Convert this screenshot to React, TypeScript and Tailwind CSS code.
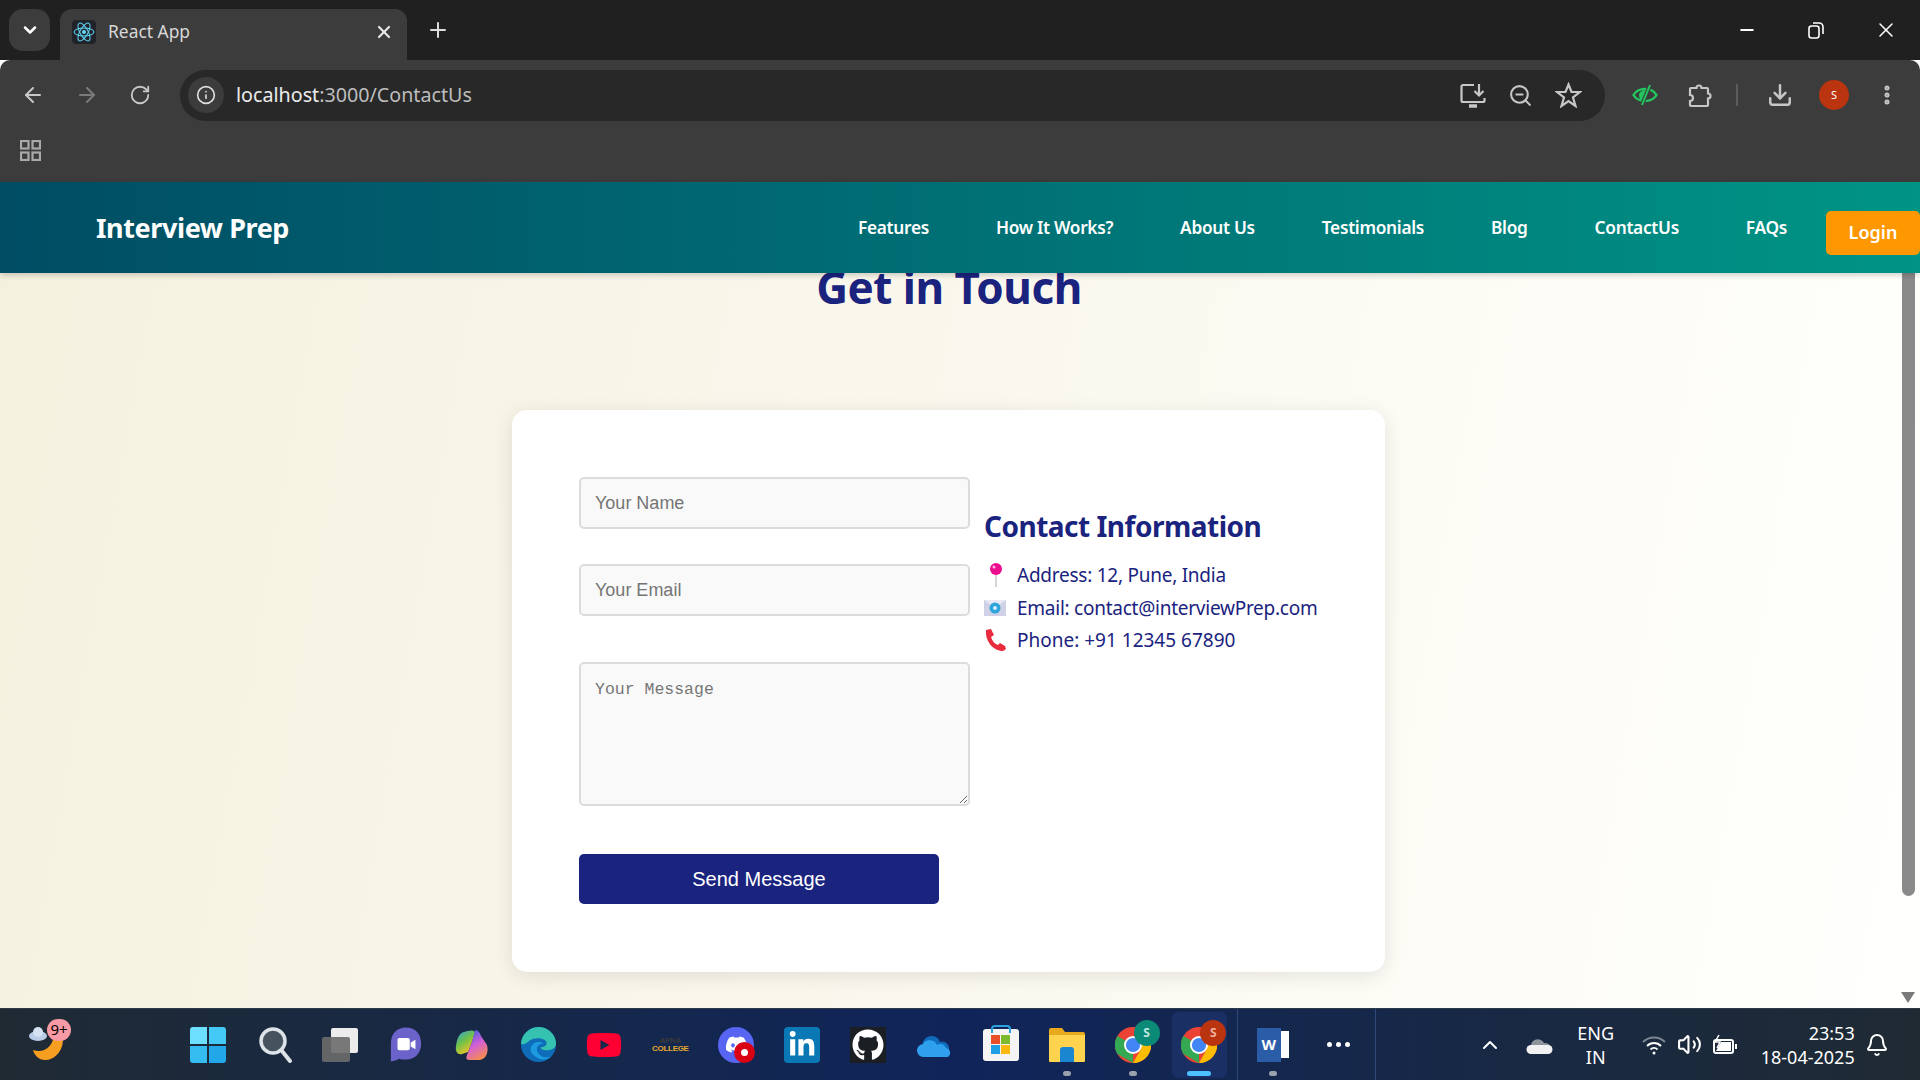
import React from "react";
import { ArrowLeft, ArrowRight, RotateCw, Info, ChevronDown, X, Plus, Minus, ZoomOut, Download, MoreVertical, ChevronUp, Bell, Volume2 } from "lucide-react";
import { FaLinkedinIn, FaGithub, FaDiscord, FaYoutube } from "react-icons/fa";

const ui = "font-['Noto_Sans','Open_Sans',sans-serif]";

function ReactLogo() {
  return (
    <svg width="24" height="24" viewBox="0 0 24 24" className="rounded-sm bg-[#20232a]">
      <g fill="none" stroke="#61dafb" strokeWidth="1">
        <ellipse cx="12" cy="12" rx="10" ry="4" />
        <ellipse cx="12" cy="12" rx="10" ry="4" transform="rotate(60 12 12)" />
        <ellipse cx="12" cy="12" rx="10" ry="4" transform="rotate(120 12 12)" />
      </g>
      <circle cx="12" cy="12" r="2" fill="#61dafb" />
    </svg>
  );
}

function ChromeLogo() {
  return (
    <svg width="36" height="36" viewBox="0 0 38 38">
      <circle cx="19" cy="19" r="19" fill="#ea4335" />
      <path d="M2.5 9.5 A19 19 0 0 0 2.5 28.5 L19 38 L19 19 Z" fill="#34a853" />
      <path d="M19 10 H36 A19 19 0 0 1 19 38 L27 24 Z" fill="#fbbc04" />
      <circle cx="19" cy="19" r="9.5" fill="#fff" />
      <circle cx="19" cy="19" r="7.5" fill="#4285f4" />
    </svg>
  );
}

function Badge({ color, text }: { color: string; text: string }) {
  return (
    <span
      className={`absolute -right-[9px] -top-[7px] flex h-[26px] w-[26px] items-center justify-center rounded-full text-[12px] font-bold ${color}`}
    >
      {text}
    </span>
  );
}

function Cell({ children, dot }: { children: React.ReactNode; dot?: boolean }) {
  return (
    <div className="relative flex h-[72px] w-[66.05px] shrink-0 items-center justify-center">
      {children}
      {dot && <span className="absolute bottom-[5px] h-[5px] w-[8px] rounded-full bg-[#9aa3ad]" />}
    </div>
  );
}

function Toolbar() {
  return (
    <div className="flex h-[122px] flex-col rounded-t-[10px] bg-[#3c3c3c]">
      <div className="flex h-[70px] items-center">
        <div className="flex w-[174px] shrink-0 items-center pl-[21px] text-[#c7c7c7]">
          <ArrowLeft size={24} strokeWidth={2} className="mr-[30px]" />
          <ArrowRight size={24} strokeWidth={2} className="mr-[30px] text-[#7b7b7b]" />
          <RotateCw size={22} strokeWidth={2} />
        </div>
        <div className="ml-[6px] flex h-[51px] w-[1425px] items-center rounded-full bg-[#282828] pl-[8px] pr-[23px]">
          <div className="flex h-[36px] w-[36px] items-center justify-center rounded-full bg-[#3c3c3c] text-[#dcdcdc]">
            <Info size={20} />
          </div>
          <div className={`ml-[12px] text-[19.7px] leading-none text-[#ececec] ${ui}`}>
            localhost<span className="text-[#bdbdbd]">:3000/ContactUs</span>
          </div>
          <div className="ml-auto flex items-center text-[#c7c7c7]">
            <svg width="28" height="26" viewBox="0 0 28 26" fill="none" stroke="currentColor" strokeWidth="2.2">
              <path d="M15 3H4a1.5 1.5 0 0 0-1.5 1.5v14A1.5 1.5 0 0 0 4 20h20a1.5 1.5 0 0 0 1.5-1.5V16" />
              <path d="M10 24h8" strokeWidth="3.5" />
              <path d="M20 2v11M15.5 9l4.5 4.5L24.500 9" />
            </svg>
            <ZoomOut size={25} strokeWidth={2} className="ml-[21px]" />
            <svg width="27" height="26" viewBox="0 0 27 26" fill="none" stroke="currentColor" strokeWidth="2.2" className="ml-[22px]">
              <polygon points="13.500,2.500 16.500,10 25,10 18,15.500 20.500,24 13.500,19 6.500,24 9,15.500 2,10 10.500,10" />
            </svg>
          </div>
        </div>
        <div className="flex flex-1 items-center pl-[27px] text-[#c7c7c7]">
          <svg width="26" height="24" viewBox="0 0 26 24" fill="none" className="shrink-0">
            <path d="M1.500 12C6 4 20 4 24.500 12 20 20 6 20 1.500 12Z" stroke="#22c55e" strokeWidth="2.500" />
            <path d="M7 12c0-3 3-5 8-5l-5 11c-2-1-3-3-3-6z" fill="#22c55e" />
            <path d="M18 2 10 22" stroke="#3c3c3c" strokeWidth="4" />
            <path d="M18 2 10 22" stroke="#22c55e" strokeWidth="2" />
          </svg>
          <svg width="25" height="26" viewBox="0 0 25 26" fill="none" stroke="currentColor" strokeWidth="2.200" className="ml-[29px] shrink-0">
            <path d="M4 6h5.500a2.500 2.500 0 0 1 5 0H20a1 1 0 0 1 1 1v4.500a2.500 2.500 0 0 1 0 5V23a1 1 0 0 1-1 1H4a1 1 0 0 1-1-1v-4a3 3 0 0 0 0-6V7a1 1 0 0 1 1-1z" />
          </svg>
          <span className="ml-[24px] h-[22px] w-[2px] shrink-0 bg-[#5c5c5c]" />
          <Download size={26} strokeWidth={2.3} className="ml-[29px] shrink-0" />
          <span className={`ml-[26px] flex h-[30px] w-[30px] shrink-0 items-center justify-center rounded-full bg-[#b9340f] text-[11px] text-white ${ui}`}>
            S
          </span>
          <MoreVertical size={24} strokeWidth={3} className="ml-[26px] shrink-0" />
        </div>
      </div>
      <div className="flex h-[52px] items-start pl-[20px] pt-[10px] text-[#a9a9a9]">
        <svg width="21" height="21" viewBox="0 0 21 21" fill="none" stroke="currentColor" strokeWidth="2.200">
          <rect x="1" y="1" width="7.500" height="7.500" />
          <rect x="12.500" y="1" width="7.500" height="7.500" />
          <rect x="1" y="12.500" width="7.500" height="7.500" />
          <rect x="12.500" y="12.500" width="7.500" height="7.500" />
        </svg>
      </div>
    </div>
  );
}

function TabStrip() {
  return (
    <div className="flex h-[60px] bg-[#202020] pt-[9px]">
      <div className="ml-[9px] flex h-[42px] w-[41px] items-center justify-center rounded-[14px] bg-[#3c3c3c] text-white">
        <ChevronDown size={20} strokeWidth={3} />
      </div>
      <div className="ml-[10px] flex h-[51px] w-[347px] items-center rounded-t-[12px] bg-[#3c3c3c] pl-[12px] pr-[13px] pb-[6px]">
        <ReactLogo />
        <span className={`ml-[12px] text-[17.4px] text-[#d8d8d8] ${ui}`}>React App</span>
        <X size={20} strokeWidth={2.6} className="ml-auto text-[#e6e6e6]" />
      </div>
      <div className="ml-[19px] flex h-[42px] items-center text-[#dcdcdc]">
        <Plus size={24} strokeWidth={2} />
      </div>
      <div className="ml-auto flex h-[42px] items-center pr-[22px] text-white">
        <Minus size={20} strokeWidth={2.4} className="mr-[50px]" />
        <svg width="18" height="18" viewBox="0 0 18 18" fill="none" stroke="currentColor" strokeWidth="1.6" className="mr-[49px]">
          <rect x="2" y="5" width="10" height="12" rx="2.5" />
          <path d="M6 2h6a4 4 0 0 1 4 4v7" />
        </svg>
        <X size={24} strokeWidth={1.5} />
      </div>
    </div>
  );
}

function Navbar() {
  const links = ["Features", "How It Works?", "About Us", "Testimonials", "Blog", "ContactUs", "FAQs"];
  return (
    <nav className={`relative z-10 flex h-[91px] items-center bg-gradient-to-r from-[#004d64] to-[#009485] pl-[96px] shadow-[0_2px_6px_rgba(0,0,0,0.2)] ${ui}`}>
      <div className="mt-[2px] text-[27px] font-bold tracking-[-0.4px] text-white">Interview Prep</div>
      <ul className="ml-auto flex items-center gap-[67px] text-[17.3px] font-semibold tracking-[-0.3px] text-white">
        {links.map((l) => (
          <li key={l}>{l}</li>
        ))}
      </ul>
      <button className="ml-[39px] mt-[10px] h-[44px] w-[94px] rounded-[5px] bg-[#ff9800] text-[18px] font-semibold text-white">Login</button>
    </nav>
  );
}

function ContactRow({ icon, children }: { icon: React.ReactNode; children: React.ReactNode }) {
  return (
    <li className="flex h-[32.6px] items-center">
      <span className="flex w-[33px] shrink-0 items-center">{icon}</span>
      {children}
    </li>
  );
}

function ContactPage() {
  const field = "block h-[52px] w-[391px] rounded-[5px] border-2 border-[#dcdcdc] bg-[#f9f9f9] px-[14px] font-['Liberation_Sans',sans-serif] text-[18px] placeholder:text-[#757575]";
  return (
    <div className="flex min-w-0 flex-1 flex-col items-center overflow-hidden">
      <h1 className={`-mt-[16px] mb-[93px] h-[60px] text-[44px] font-bold leading-[60px] tracking-[-0.5px] text-[#1a237e] ${ui}`}>Get in Touch</h1>
      <div className="ml-[-1px] flex h-[562px] w-[873px] shrink-0 rounded-[15px] bg-white pl-[67px] pt-[67px] shadow-[0_4px_20px_rgba(0,0,0,0.1)]">
        <form className="flex w-[391px] shrink-0 flex-col">
          <input className={field} placeholder="Your Name" readOnly />
          <input className={`${field} mt-[35px]`} placeholder="Your Email" readOnly />
          <textarea
            className="mt-[46px] block h-[144px] w-[391px] rounded-[5px] border-2 border-[#dcdcdc] bg-[#f9f9f9] px-[14px] py-[14px] font-['Liberation_Mono',monospace] text-[16.5px] placeholder:text-[#757575]"
            placeholder="Your Message"
            readOnly
          />
          <button type="button" className="mt-[48px] h-[50px] w-[360px] rounded-[5px] bg-[#1a237e] font-['Liberation_Sans',sans-serif] text-[20px] text-white">
            Send Message
          </button>
        </form>
        <div className={`ml-[14px] pt-[29px] ${ui}`}>
          <h2 className="text-[28px] font-bold leading-[40px] tracking-[-0.5px] text-[#1a237e]">Contact Information</h2>
          <ul className="mt-[13px] text-[19px] tracking-[-0.25px] text-[#1a237e]">
            <ContactRow
              icon={
                <svg width="24" height="26" viewBox="0 0 24 26">
                  <path d="M12 12v13" stroke="#d6d6d6" strokeWidth="2" />
                  <circle cx="12" cy="7" r="6" fill="#ec0e8f" />
                  <circle cx="10" cy="5" r="1.5" fill="#ffb3dc" />
                </svg>
              }
            >
              Address: 12, Pune, India
            </ContactRow>
            <ContactRow
              icon={
                <svg width="22" height="18" viewBox="0 0 22 18">
                  <rect x="0" y="1" width="22" height="16" fill="#cfd2e6" />
                  <path d="M0 1l11 8 11-8" fill="#e8e9f4" />
                  <circle cx="11" cy="9" r="5.5" fill="#2ea6dc" />
                  <circle cx="11" cy="9" r="2" fill="#d0eeff" />
                </svg>
              }
            >
              Email: contact@interviewPrep.com
            </ContactRow>
            <ContactRow
              icon={
                <svg width="22" height="22" viewBox="0 0 22 22">
                  <path d="M2 1l5-1 3 6-3 2c1 4 4 7 7 8l2-2 5 3 1 3-3 2C9 22 1 12 2 1z" fill="#ea2a3d" />
                </svg>
              }
            >
              <span className="tracking-normal">Phone: +91 12345 67890</span>
            </ContactRow>
          </ul>
        </div>
      </div>
    </div>
  );
}

function Taskbar() {
  return (
    <div className={`flex h-[72px] shrink-0 items-center border-t border-[#2c3a48] bg-gradient-to-r from-[#1f2a33] via-[#10245a] to-[#1f2a33] text-white ${ui}`}>
      <div className="relative ml-[29px] flex h-[72px] w-[146px] shrink-0 items-center">
        <svg width="36" height="42" viewBox="0 0 36 42" className="mb-[2px]">
          <path d="M33 10C37 25 27 37 16 37 10 37 5 32 4 27 15 31 25 23 25 10Z" fill="#f59e1f" />
          <ellipse cx="9" cy="13" rx="9" ry="5" fill="#b9cde8" />
          <circle cx="9" cy="9" r="5" fill="#d5e2f2" />
        </svg>
        <span className="absolute left-[18px] top-[10px] flex h-[22px] w-[24px] items-center justify-center rounded-full bg-[#f79aa5] text-[15px] text-black">9+</span>
      </div>
      <Cell>
        <div className="grid h-[36px] w-[36px] grid-cols-2 gap-[2px]">
          <span className="rounded-tl-[3px] bg-[#6ee0ff]" />
          <span className="rounded-tr-[3px] bg-[#44c8f5]" />
          <span className="rounded-bl-[3px] bg-[#35bdf2]" />
          <span className="rounded-br-[3px] bg-[#22a8e8]" />
        </div>
      </Cell>
      <Cell>
        <svg width="34" height="36" viewBox="0 0 34 36" fill="none" className="ml-[3px]">
          <circle cx="14" cy="14" r="12" fill="#46535f" stroke="#dde3e8" strokeWidth="3.5" />
          <path d="M23 24l8 10" stroke="#dde3e8" strokeWidth="4" strokeLinecap="round" />
        </svg>
      </Cell>
      <Cell>
        <div className="relative h-[34px] w-[36px]">
          <span className="absolute right-0 top-0 h-[25px] w-[27px] rounded-[2px] bg-[#ececec]" />
          <span className="absolute left-0 top-[9px] h-[25px] w-[28px] rounded-[2px] bg-[#6b6b6b]/90" />
        </div>
      </Cell>
      <Cell>
        <svg width="34" height="37" viewBox="0 0 36 38">
          <path d="M18 1C8 1 2 8 2 18v19c4-1 7-2 9-3 2 1 4 1 7 1 10 0 16-7 16-17S28 1 18 1z" fill="#6b63c9" />
          <rect x="9" y="12" width="13" height="13" rx="2" fill="#fff" />
          <path d="M23 17l5-3v10l-5-3z" fill="#fff" />
        </svg>
      </Cell>
      <Cell>
        <svg width="34" height="32" viewBox="0 0 34 32">
          <defs>
            <linearGradient id="copA" x1="0" y1="0" x2="0.6" y2="1">
              <stop offset="0" stopColor="#2f9be8" />
              <stop offset="0.5" stopColor="#6cc24a" />
              <stop offset="1" stopColor="#f7c325" />
            </linearGradient>
            <linearGradient id="copB" x1="0.2" y1="0" x2="0.6" y2="1">
              <stop offset="0" stopColor="#3a5fe0" />
              <stop offset="0.5" stopColor="#d35fd6" />
              <stop offset="1" stopColor="#f78b52" />
            </linearGradient>
          </defs>
          <path d="M9 3C4 4 2 10 1 17c-1 6 2 9 6 8l6-2 4-10 3-10c-3-3-7-1-11 0z" fill="url(#copA)" />
          <path d="M20 1c3 0 5 3 6 6l6 9c2 7-1 14-7 15H14c-3 0-3-3-2-5l5-13z" fill="url(#copB)" />
        </svg>
      </Cell>
      <Cell>
        <svg width="37" height="37" viewBox="0 0 38 38">
          <circle cx="19" cy="19" r="18" fill="#0f6cb8" />
          <path d="M1 18C2 8 10 1 19 1c10 0 18 8 18 17 0 5-5 7-10 7-4 0-6-2-6-3 5 0 7-3 6-6-2-4-12-5-17-1-4 3-7 5-9 3z" fill="#35c2b0" />
          <path d="M14 30c-4-3-4-9 0-12 3-2 8-2 10 0-5 0-8 4-6 9 2 4 8 7 14 4-5 5-13 4-18-1z" fill="#1c9be0" />
        </svg>
      </Cell>
      <Cell>
        <FaYoutube size={36} className="text-[#ff0033]" />
      </Cell>
      <Cell>
        <div className="text-center font-['Liberation_Sans',sans-serif] text-[8px] font-bold leading-[8px] tracking-[-0.3px] text-[#e6a92c]">
          <div className="text-[#3a3a3a]">APNA</div>
          <div>COLLEGE</div>
        </div>
      </Cell>
      <Cell>
        <div className="relative flex h-[36px] w-[36px] items-center justify-center rounded-full bg-[#5865f2]">
          <FaDiscord size={23} />
          <span className="absolute bottom-0 right-[-1px] flex h-[21px] w-[21px] items-center justify-center rounded-full bg-[#d90013]">
            <span className="h-[7px] w-[7px] rounded-full bg-white" />
          </span>
        </div>
      </Cell>
      <Cell>
        <div className="flex h-[36px] w-[36px] items-center justify-center rounded-[4px] bg-[#0a78b5]">
          <FaLinkedinIn size={28} />
        </div>
      </Cell>
      <Cell>
        <div className="flex h-[36px] w-[36px] items-center justify-center bg-[#1b1f23]">
          <FaGithub size={32} />
        </div>
      </Cell>
      <Cell>
        <svg width="36" height="24" viewBox="0 0 36 24">
          <path d="M6 15a9 9 0 0 1 17-6 7 7 0 0 1 9 8z" fill="#0f6cbd" />
          <path d="M7 24a6.500 6.500 0 0 1-1-13 8 8 0 0 1 14 1 6 6 0 0 1 9 3 5 5 0 0 1 2 9z" fill="#2ea0ed" />
        </svg>
      </Cell>
      <Cell>
        <div className="relative flex h-[32px] w-[36px] items-center justify-center rounded-[3px] bg-[#f4f4f4]">
          <span className="absolute -top-[4px] h-[8px] w-[20px] rounded-t-[4px] border-2 border-b-0 border-[#2aa3dc]" />
          <div className="grid grid-cols-2 gap-[1px]">
            <span className="h-[9px] w-[9px] bg-[#e8502a]" />
            <span className="h-[9px] w-[9px] bg-[#7cb92c]" />
            <span className="h-[9px] w-[9px] bg-[#1fa0e6]" />
            <span className="h-[9px] w-[9px] bg-[#fbb80e]" />
          </div>
        </div>
      </Cell>
      <Cell dot>
        <svg width="38" height="36" viewBox="0 0 38 36">
          <path d="M1 3a2 2 0 0 1 2-2h11l3 4h18a2 2 0 0 1 2 2v5H1z" fill="#e8aa1c" />
          <path d="M1 8h36v26a1 1 0 0 1-1 1H2a1 1 0 0 1-1-1z" fill="#ffd34e" />
          <path d="M12 23a3 3 0 0 1 3-3h8a3 3 0 0 1 3 3v12H12z" fill="#1a86d0" />
        </svg>
      </Cell>
      <Cell dot>
        <div className="relative">
          <ChromeLogo />
          <Badge color="bg-[#0b8a78] text-[#bfe8e0]" text="S" />
        </div>
      </Cell>
      <div className="relative ml-[6px] flex h-[66px] w-[55px] shrink-0 items-center justify-center rounded-[6px] bg-[#1a2f63]">
        <div className="relative">
          <ChromeLogo />
          <Badge color="bg-[#b9340f] text-[#f0b0a0]" text="S" />
        </div>
        <span className="absolute bottom-[2px] h-[5px] w-[24px] rounded-full bg-[#4cc2ff]" />
      </div>
      <span className="ml-[10px] h-[72px] w-px shrink-0 bg-[#2f4a78]" />
      <div className="relative flex h-[72px] w-[70px] shrink-0 items-center justify-center">
        <div className="relative flex h-[34px] w-[32px] items-center justify-center">
          <span className="absolute right-0 top-[3px] h-[27px] w-[14px] bg-white" />
          <span className="absolute left-0 top-0 flex h-[34px] w-[24px] items-center justify-center bg-[#2b5ca8] text-[15px] font-bold">W</span>
        </div>
        <span className="absolute bottom-[5px] h-[5px] w-[8px] rounded-full bg-[#9aa3ad]" />
      </div>
      <div className="mr-[5px] flex w-[62px] shrink-0 items-center justify-center gap-[4px]">
        <span className="h-[5px] w-[5px] rounded-full bg-white" />
        <span className="h-[5px] w-[5px] rounded-full bg-white" />
        <span className="h-[5px] w-[5px] rounded-full bg-white" />
      </div>
      <span className="h-[72px] w-px shrink-0 bg-[#2f4a78]" />
      <ChevronUp size={24} strokeWidth={2} className="ml-[102px] shrink-0" />
      <svg width="27" height="18" viewBox="0 0 27 18" className="ml-[24px] shrink-0">
        <path d="M5 12a7 7 0 0 1 13-5 6 6 0 0 1 7 6z" fill="#8e959c" />
        <path d="M5 18a4.500 4.500 0 0 1 0-9h17a4.500 4.500 0 0 1 0 9z" fill="#f2f2f2" />
      </svg>
      <div className="ml-[21px] w-[44px] shrink-0 text-center text-[18px] leading-[24px]">
        <div>ENG</div>
        <div>IN</div>
      </div>
      <svg width="24" height="22" viewBox="0 0 24 22" fill="none" stroke="white" strokeWidth="1.8" className="ml-[24px] shrink-0">
        <path d="M1 8c6-6 16-6 22 0" stroke="#7d8791" />
        <path d="M5 12c4-4 10-4 14 0" />
        <path d="M8.500 15.500c2-2 5-2 7 0" />
        <circle cx="12" cy="19" r="1.500" fill="white" stroke="none" />
      </svg>
      <Volume2 size={25} className="ml-[11px] shrink-0" />
      <svg width="26" height="22" viewBox="0 0 26 22" fill="none" stroke="white" strokeWidth="2" className="ml-[10px] shrink-0">
        <rect x="2" y="6" width="19" height="13" rx="2" />
        <path d="M24 10v5" />
        <path d="M4 17h15V8H9z" fill="white" stroke="none" />
        <path d="M7 1 3 8h5l-3 6" strokeWidth="1.5" />
      </svg>
      <div className="ml-[16px] w-[101px] shrink-0 text-right text-[18px] leading-[24px]">
        <div>23:53</div>
        <div>18-04-2025</div>
      </div>
      <Bell size={24} className="ml-[10px] shrink-0" />
    </div>
  );
}

export default function App() {
  return (
    <div className="flex h-[1080px] w-[1920px] flex-col overflow-hidden">
      <TabStrip />
      <Toolbar />
      <Navbar />
      <div className="flex min-h-0 flex-1 bg-[linear-gradient(100deg,#f5f1df,#fffffd)]">
        <ContactPage />
        <div className="flex w-[22px] shrink-0 flex-col pb-[5px] pl-[4px]">
          <div className="h-[623px] w-[13px] rounded-b-full bg-[#8a8a8a]" />
          <div className="ml-[-1px] mt-auto h-0 w-0 border-x-[7px] border-t-[11px] border-x-transparent border-t-[#7a7a7a]" />
        </div>
      </div>
      <Taskbar />
    </div>
  );
}
